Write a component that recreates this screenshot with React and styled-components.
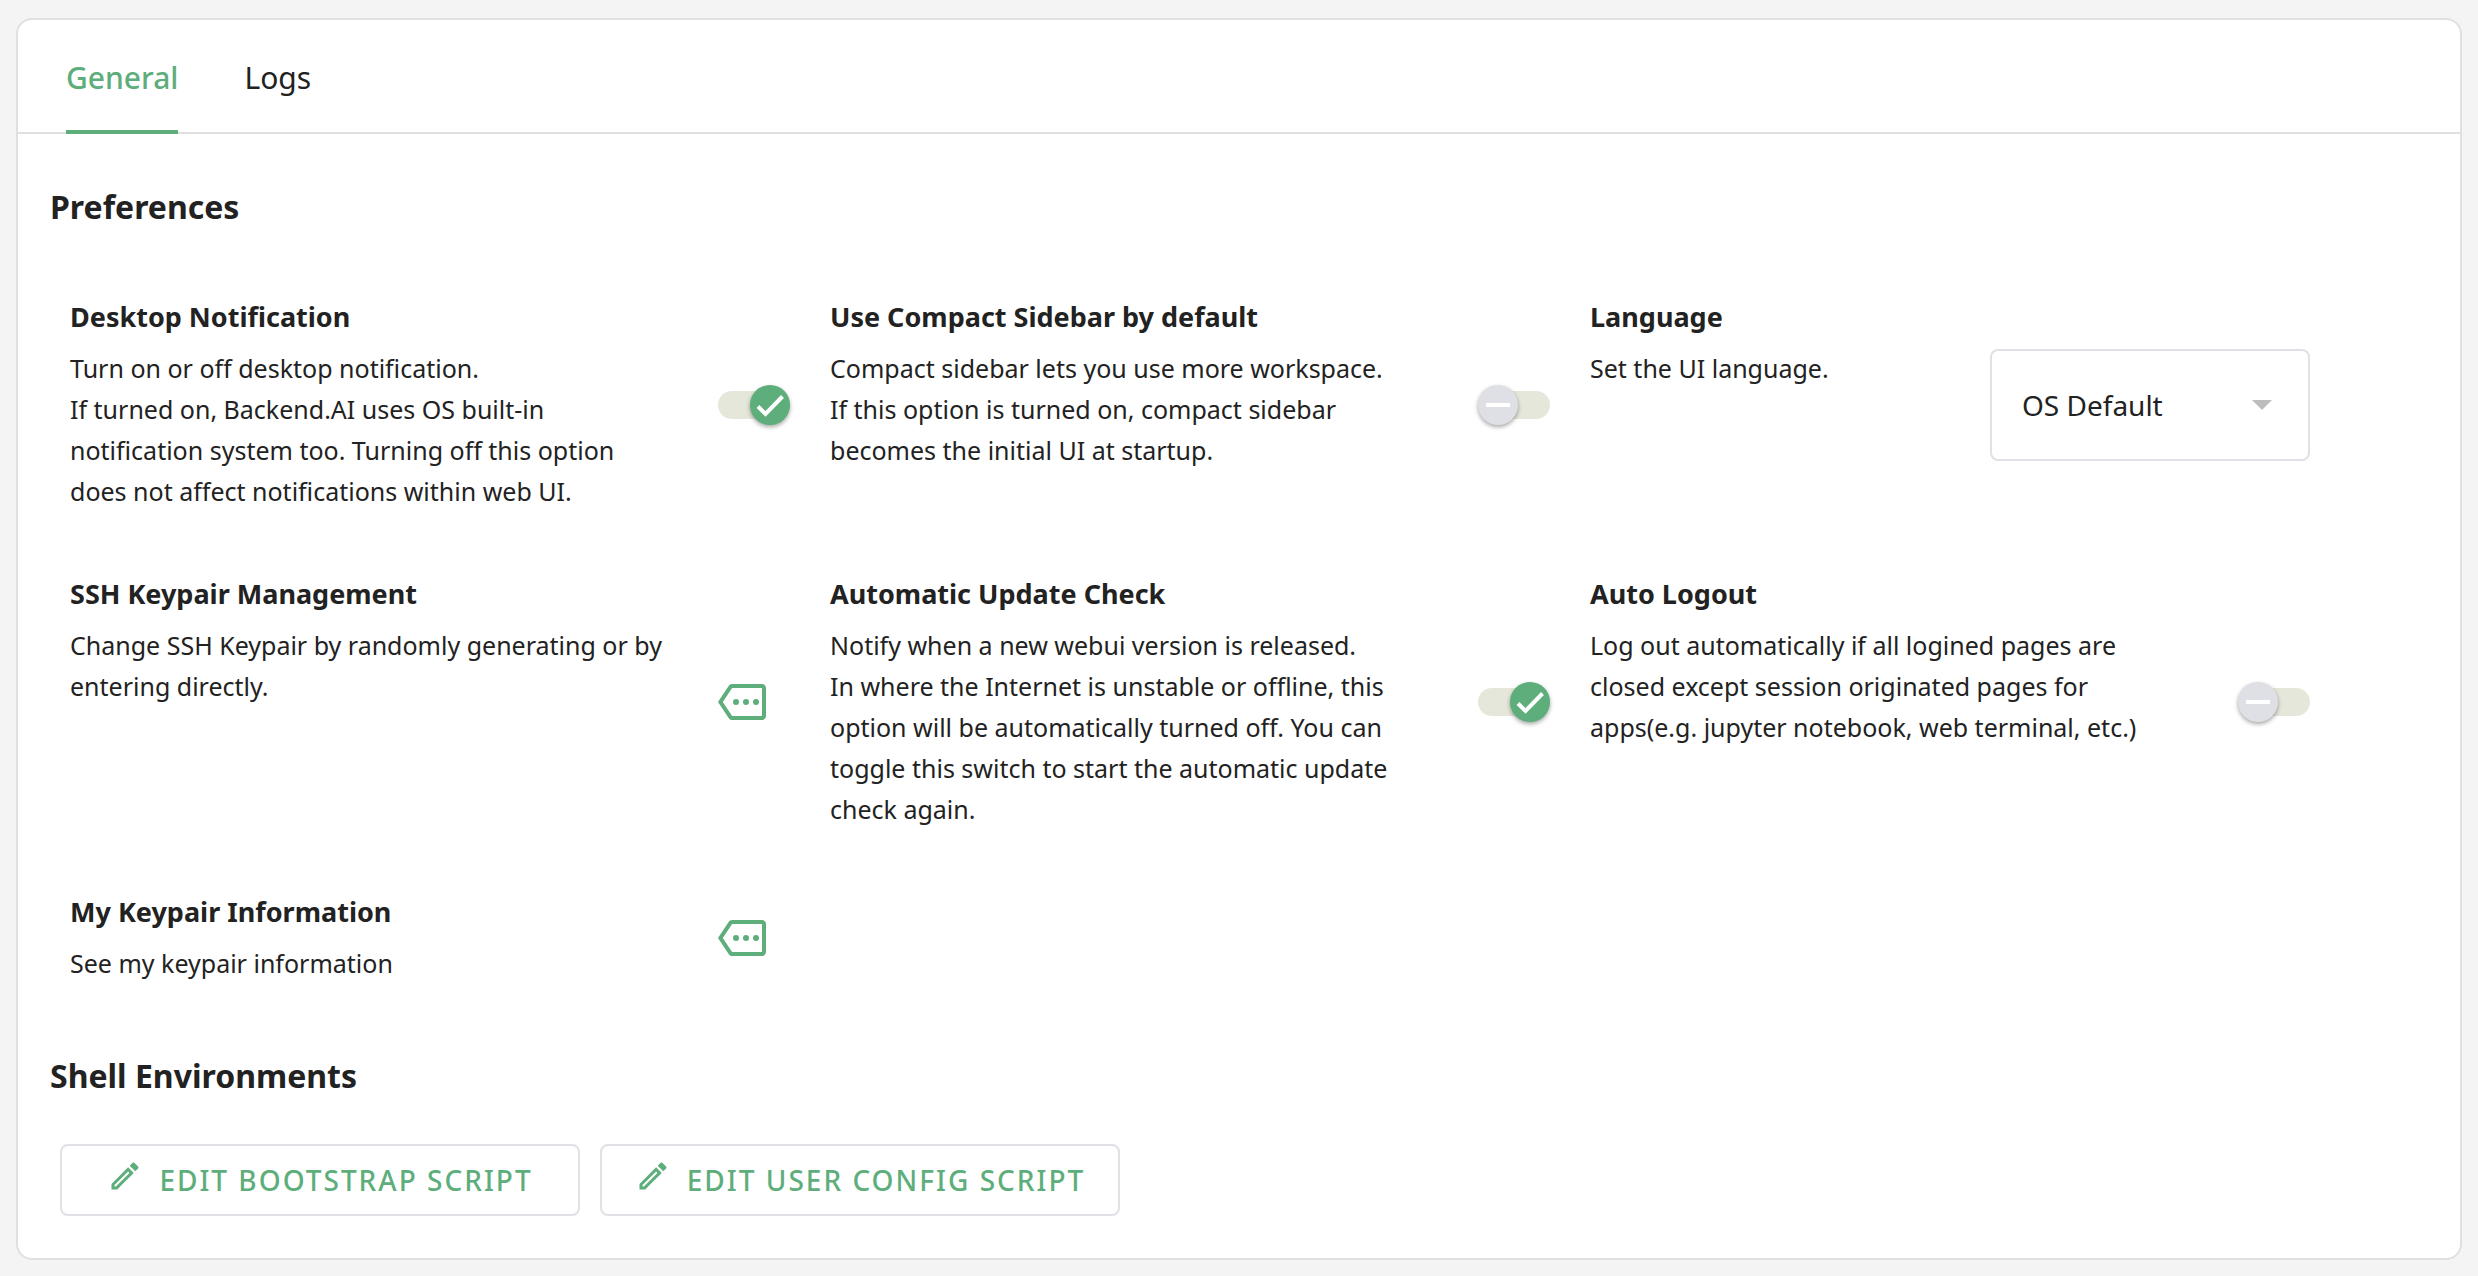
import React, { useState } from 'react';
import styled, { createGlobalStyle } from 'styled-components';

const preferences = [
    {
        id: 'notification',
        title: 'Desktop Notification',
        text: 'Turn on or off desktop notification.\nIf turned on, Backend.AI uses OS built-in\nnotification system too. Turning off this option\ndoes not affect notifications within web UI.',
        type: 'switch',
        on: true,
    },
    {
        id: 'compact',
        title: 'Use Compact Sidebar by default',
        text: 'Compact sidebar lets you use more workspace.\nIf this option is turned on, compact sidebar\nbecomes the initial UI at startup.',
        type: 'switch',
        on: false,
    },
    { id: 'language', title: 'Language', text: 'Set the UI language.', type: 'select' },
    {
        id: 'ssh',
        title: 'SSH Keypair Management',
        text: 'Change SSH Keypair by randomly generating or by\nentering directly.',
        type: 'more',
    },
    {
        id: 'update',
        title: 'Automatic Update Check',
        text: 'Notify when a new webui version is released.\nIn where the Internet is unstable or offline, this\noption will be automatically turned off. You can\ntoggle this switch to start the automatic update\ncheck again.',
        type: 'switch',
        on: true,
    },
    {
        id: 'logout',
        title: 'Auto Logout',
        text: 'Log out automatically if all logined pages are\nclosed except session originated pages for\napps(e.g. jupyter notebook, web terminal, etc.)',
        type: 'switch',
        on: false,
    },
    { id: 'keypair', title: 'My Keypair Information', text: 'See my keypair information', type: 'more' },
];

function Toggle({ labelledBy, initial }) {
    const [on, setOn] = useState(initial);
    return (
        <SCSwitch>
            <SCTrack
                type='checkbox'
                role='switch'
                aria-labelledby={labelledBy}
                checked={on}
                onChange={(e) => setOn(e.target.checked)}
            />
            <SCKnob $on={on}>
                <svg width='40' height='40' viewBox='0 0 40 40' fill='none' stroke='#ffffff' strokeWidth='4'>
                    {on ? <path d='M8 21.5l7.5 7.5L32.5 11.5' /> : <path d='M8 20h24' />}
                </svg>
            </SCKnob>
        </SCSwitch>
    )
}

function LanguageSelect({ labelledBy }) {
    return (
        <SCSelectBox>
            <SCSelect aria-labelledby={labelledBy} defaultValue='default'>
                <option value='default'>OS Default</option>
                <option value='en'>English</option>
                <option value='ko'>한국어</option>
            </SCSelect>
            <SCArrow width='20' height='10' viewBox='0 0 20 10'>
                <path d='M0 0h20L10 10z' fill='#bdbdbd' />
            </SCArrow>
        </SCSelectBox>
    )
}

function MoreButton({ labelledBy }) {
    return (
        <SCMoreButton type='button' aria-labelledby={labelledBy}>
            <svg width='48' height='48' viewBox='0 0 24 24' fill='currentColor'>
                <path d='M22 3H7c-.69 0-1.23.35-1.59.88L0 12l5.41 8.11c.36.53.9.89 1.59.89h15c1.1 0 2-.9 2-2V5c0-1.1-.9-2-2-2zm0 16H7.07L2.4 12l4.66-7H22v14z' />
                <circle cx='9' cy='12' r='1.5' />
                <circle cx='14' cy='12' r='1.5' />
                <circle cx='19' cy='12' r='1.5' />
            </svg>
        </SCMoreButton>
    )
}

function Preference({ item }) {
    const labelId = `${item.id}-label`;
    return (
        <SCItem>
            <div>
                <SCItemTitle id={labelId}>{item.title}</SCItemTitle>
                <SCItemText>{item.text}</SCItemText>
            </div>
            {item.type === 'switch' && <Toggle labelledBy={labelId} initial={item.on} />}
            {item.type === 'select' && <LanguageSelect labelledBy={labelId} />}
            {item.type === 'more' && <MoreButton labelledBy={labelId} />}
        </SCItem>
    )
}

function ScriptButton({ children }) {
    return (
        <SCScriptButton type='button'>
            <SCPencil width='36' height='36' viewBox='0 0 24 24' fill='currentColor'>
                <path d='M14.06 9.02l.92.92L5.92 19H5v-.92l9.06-9.06M17.66 3c-.25 0-.51.1-.7.29l-1.83 1.83 3.75 3.75 1.83-1.83c.39-.39.39-1.02 0-1.41l-2.34-2.34c-.2-.2-.45-.29-.71-.29zm-3.6 3.19L3 17.25V21h3.75L17.81 9.94l-3.75-3.75z' />
            </SCPencil>
            {children}
        </SCScriptButton>
    )
}

function App() {
    const [tab, setTab] = useState('General');
    return (
        <>
            <GlobalStyle />
            <SCCard>
                <SCTabs role='tablist'>
                    {['General', 'Logs'].map((name) => (
                        <SCTab key={name} type='button' role='tab' aria-selected={tab === name} $active={tab === name} onClick={() => setTab(name)}>
                            {name}
                        </SCTab>
                    ))}
                </SCTabs>
                <SCBody>
                    <SCHeading>Preferences</SCHeading>
                    <SCGrid>
                        {preferences.map((item) => <Preference key={item.id} item={item} />)}
                    </SCGrid>
                    <SCHeading>Shell Environments</SCHeading>
                    <SCButtons>
                        <ScriptButton>EDIT BOOTSTRAP SCRIPT</ScriptButton>
                        <ScriptButton>EDIT USER CONFIG SCRIPT</ScriptButton>
                    </SCButtons>
                </SCBody>
            </SCCard>
        </>
    )
}

export default App;

const GlobalStyle = createGlobalStyle`
    * {
        box-sizing: border-box;
    }
    body {
        margin: 0;
        padding: 18px 16px 16px;
        background-color: #f4f4f4;
        color: #222222;
        font-family: 'Noto Sans', sans-serif;
    }
    button, select {
        font-family: inherit;
        cursor: pointer;
    }
`;
const SCCard = styled.main`
    background-color: #ffffff;
    border: 2px solid #e0e0e0;
    border-radius: 16px;
`;
const SCTabs = styled.div`
    display: flex;
    gap: 66px;
    height: 114px;
    padding: 0 48px;
    border-bottom: 2px solid #e0e0e0;
`;
const SCTab = styled.button`
    height: 114px;
    padding: 4px 0 0;
    border: 0;
    border-bottom: 4px solid ${(props) => props.$active ? '#5dae7b' : 'transparent'};
    background: none;
    color: ${(props) => props.$active ? '#5dae7b' : '#222222'};
    font-size: 30px;
    font-weight: ${(props) => props.$active ? '500' : '400'};
`;
const SCBody = styled.div`
    padding: 11px 32px 32px;
`;
const SCHeading = styled.h2`
    margin: 38px 0 34px;
    font-size: 32px;
    line-height: 48px;
    font-weight: 700;
`;
const SCGrid = styled.div`
    display: grid;
    grid-template-columns: repeat(auto-fill, 760px);
`;
const SCItem = styled.section`
    display: flex;
    justify-content: space-between;
    padding: 32px 20px 30px;
`;
const SCItemTitle = styled.h3`
    margin: 0 0 11px;
    font-size: 27px;
    line-height: 40px;
    font-weight: 700;
`;
const SCItemText = styled.p`
    margin: 0;
    font-size: 25px;
    line-height: 41px;
    white-space: pre-line;
`;
const SCSwitch = styled.label`
    position: relative;
    display: flex;
    align-items: center;
    align-self: center;
    flex-shrink: 0;
    width: 72px;
    height: 40px;
`;
const SCTrack = styled.input`
    appearance: none;
    width: 72px;
    height: 28px;
    margin: 0;
    border-radius: 14px;
    background-color: #e5e7da;
    cursor: pointer;
`;
const SCKnob = styled.span`
    position: absolute;
    top: 0;
    left: ${(props) => props.$on ? '32px' : '0'};
    width: 40px;
    height: 40px;
    border-radius: 50%;
    background-color: ${(props) => props.$on ? '#5dae7b' : '#dfe0e6'};
    box-shadow: 0 2px 4px rgba(0, 0, 0, 0.35);
    pointer-events: none;
`;
const SCSelectBox = styled.div`
    position: relative;
    display: flex;
    align-self: center;
    width: 320px;
    height: 112px;
`;
const SCSelect = styled.select`
    appearance: none;
    width: 100%;
    padding: 0 30px;
    border: 2px solid #e0e0e6;
    border-radius: 8px;
    background-color: #ffffff;
    color: #222222;
    font-size: 28px;
`;
const SCArrow = styled.svg`
    position: absolute;
    right: 38px;
    top: 51px;
    pointer-events: none;
`;
const SCMoreButton = styled.button`
    display: flex;
    align-self: center;
    flex-shrink: 0;
    width: 72px;
    padding: 0;
    border: 0;
    background: none;
    color: #5dae7b;
`;
const SCButtons = styled.div`
    display: flex;
    flex-wrap: wrap;
    gap: 20px;
    padding: 10px;
`;
const SCScriptButton = styled.button`
    display: flex;
    align-items: center;
    justify-content: center;
    gap: 16px;
    min-width: 520px;
    height: 72px;
    padding: 0 32px;
    border: 2px solid #e0e0e6;
    border-radius: 8px;
    background-color: #ffffff;
    color: #5dae7b;
    font-size: 28px;
    font-weight: 500;
    letter-spacing: 2px;
`;
const SCPencil = styled.svg`
    margin-bottom: 8px;
`;
